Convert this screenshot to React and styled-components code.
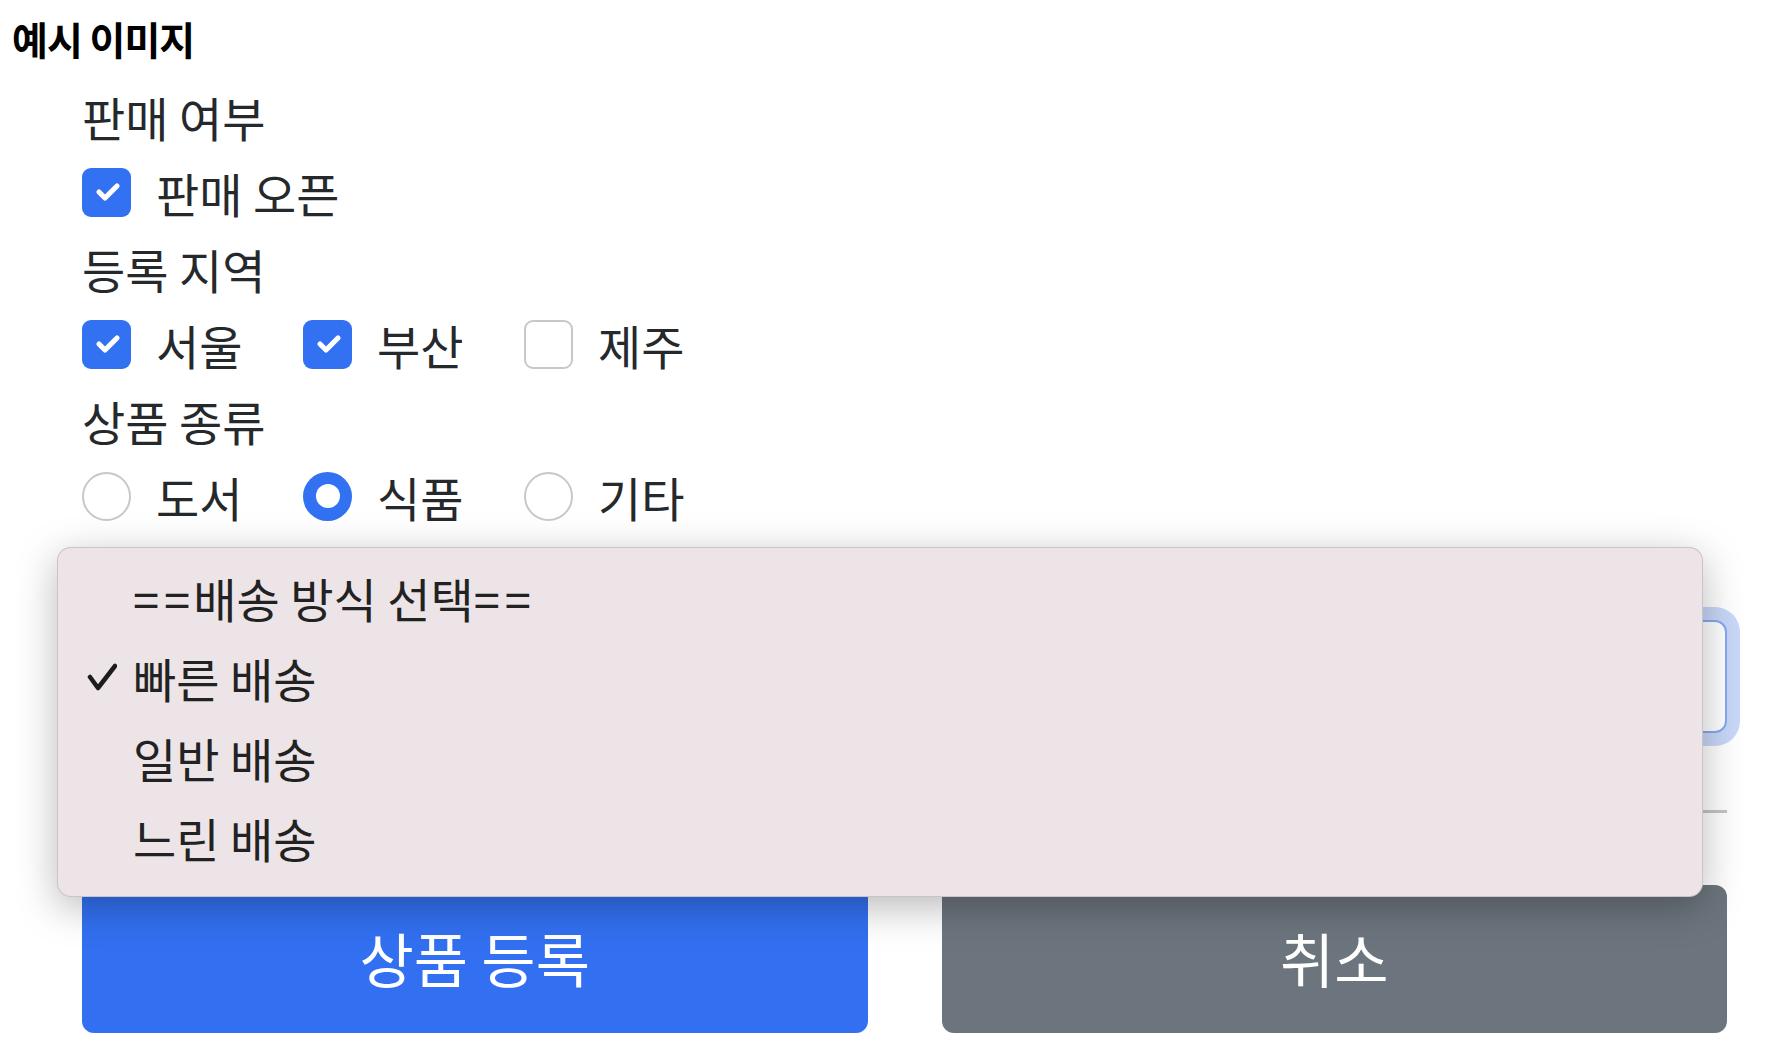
import styled, { createGlobalStyle } from "styled-components";

const GlobalStyle = createGlobalStyle`
  html, body {
    margin: 0;
    padding: 0;
    background: #fff;
  }
  body {
    font-family: "Noto Sans CJK KR", "Noto Sans", sans-serif;
    color: #212529;
  }
`;

const regions = [
  { name: "서울", on: true },
  { name: "부산", on: true },
  { name: "제주", on: false },
];

const kinds = [
  { name: "도서", on: false },
  { name: "식품", on: true },
  { name: "기타", on: false },
];

const shipping = ["==배송 방식 선택==", "빠른 배송", "일반 배송", "느린 배송"];

const Check = () => (
  <svg width="40" height="40" viewBox="0 0 20 20">
    <path
      d="m6 10 3 3 6-6"
      fill="none"
      stroke="#fff"
      strokeWidth="2.6"
      strokeLinecap="round"
      strokeLinejoin="round"
    />
  </svg>
);

const Tick = () => (
  <svg width="30" height="30" viewBox="0 0 30 30">
    <path
      d="M3 15 L11 26 L28 4"
      fill="none"
      stroke="#1c1c1c"
      strokeWidth="4.5"
      strokeLinecap="round"
      strokeLinejoin="round"
    />
  </svg>
);

const Choice = ({ name, on, round }) => (
  <Option>
    <Box $on={on} $round={round}>
      {on && (round ? <Dot /> : <Check />)}
    </Box>
    {name}
  </Option>
);

// the "=" marks of the placeholder are wider in the original font
const Placeholder = ({ text }) =>
  text.split(/(=+)/).map((part, i) =>
    part.startsWith("=") ? <Eq key={i}>{part}</Eq> : part
  );

const App = () => {
  return (
    <Page>
      <GlobalStyle />
      <Title>예시 이미지</Title>
      <Form>
        <Label>판매 여부</Label>
        <OptionRow>
          <Choice name="판매 오픈" on />
        </OptionRow>
        <Label>등록 지역</Label>
        <OptionRow>
          {regions.map((r) => (
            <Choice key={r.name} name={r.name} on={r.on} />
          ))}
        </OptionRow>
        <Label>상품 종류</Label>
        <OptionRow>
          {kinds.map((k) => (
            <Choice key={k.name} name={k.name} on={k.on} round />
          ))}
        </OptionRow>
        <SelectBox />
        <Rule />
        <ButtonRow>
          <Button $kind="primary">상품 등록</Button>
          <Button $kind="secondary">취소</Button>
        </ButtonRow>
      </Form>
      <Dropdown>
        {shipping.map((s, i) => (
          <Item key={s}>
            <TickSlot>{i === 1 && <Tick />}</TickSlot>
            {i === 0 ? <Placeholder text={s} /> : s}
          </Item>
        ))}
      </Dropdown>
    </Page>
  );
};

const Page = styled.div`
  position: relative;
  width: 1780px;
  height: 1050px;
  overflow: hidden;
  padding: 0 12px;
  box-sizing: border-box;
`;

const Title = styled.h3`
  margin: 0;
  height: 76px;
  display: flex;
  align-items: center;
  font-size: 39px;
  font-weight: 700;
  letter-spacing: -1px;
  line-height: 1;
  color: #000;
`;

const Form = styled.form`
  margin-left: 70px;
  width: 1645px;
  display: flex;
  flex-direction: column;
`;

const Label = styled.div`
  height: 80px;
  display: flex;
  align-items: center;
  font-size: 47px;
  line-height: 1;
  color: #26292c;
`;

const OptionRow = styled.div`
  height: 72px;
  display: flex;
  align-items: center;
`;

const Option = styled.label`
  min-width: 221px;
  display: flex;
  align-items: center;
  gap: 25px;
  font-size: 47px;
  line-height: 1;
  white-space: nowrap;
  color: #26292c;
`;

const Box = styled.span`
  flex: none;
  width: 49px;
  height: 49px;
  box-sizing: border-box;
  border-radius: ${(p) => (p.$round ? "50%" : "9px")};
  border: ${(p) => (p.$on ? "none" : "2px solid #c8c8c8")};
  background: ${(p) => (p.$on ? "#3271f1" : "#fff")};
  display: flex;
  align-items: center;
  justify-content: center;
`;

const Dot = styled.span`
  width: 24px;
  height: 24px;
  border-radius: 50%;
  background: #fff;
`;

const SelectBox = styled.div`
  margin-top: 88px;
  height: 113px;
  box-sizing: border-box;
  border: 2px solid #86a9f3;
  border-radius: 12px;
  background: #fff;
  box-shadow: 0 0 0 13px rgba(60, 110, 230, 0.28);
`;

const Rule = styled.hr`
  margin: 77px 0 0;
  height: 3px;
  border: none;
  background: #c4c4c4;
`;

const ButtonRow = styled.div`
  margin-top: 72px;
  display: grid;
  grid-template-columns: 1fr 1fr;
  gap: 74px;
`;

const Button = styled.button`
  height: 148px;
  border: none;
  border-radius: 12px;
  font-family: inherit;
  font-size: 59px;
  line-height: 1;
  padding-bottom: 4px;
  color: #fff;
  background: ${(p) => (p.$kind === "primary" ? "#3270f1" : "#6c757d")};
`;

const Dropdown = styled.div`
  position: absolute;
  left: 57px;
  top: 547px;
  width: 1646px;
  height: 350px;
  box-sizing: border-box;
  padding: 9px 0 21px;
  background: #ede4e7;
  border: 1px solid rgba(0, 0, 0, 0.14);
  border-radius: 14px;
  box-shadow: 0 10px 40px rgba(0, 0, 0, 0.28);
`;

const Item = styled.div`
  height: 80px;
  display: flex;
  align-items: center;
  font-size: 47px;
  line-height: 1;
  white-space: nowrap;
  color: #222;
`;

const Eq = styled.span`
  letter-spacing: 5px;
  margin-right: -2px;
`;

const TickSlot = styled.span`
  width: 75px;
  padding-left: 29px;
  box-sizing: border-box;
  display: flex;
  align-items: center;
`;

export default App;
